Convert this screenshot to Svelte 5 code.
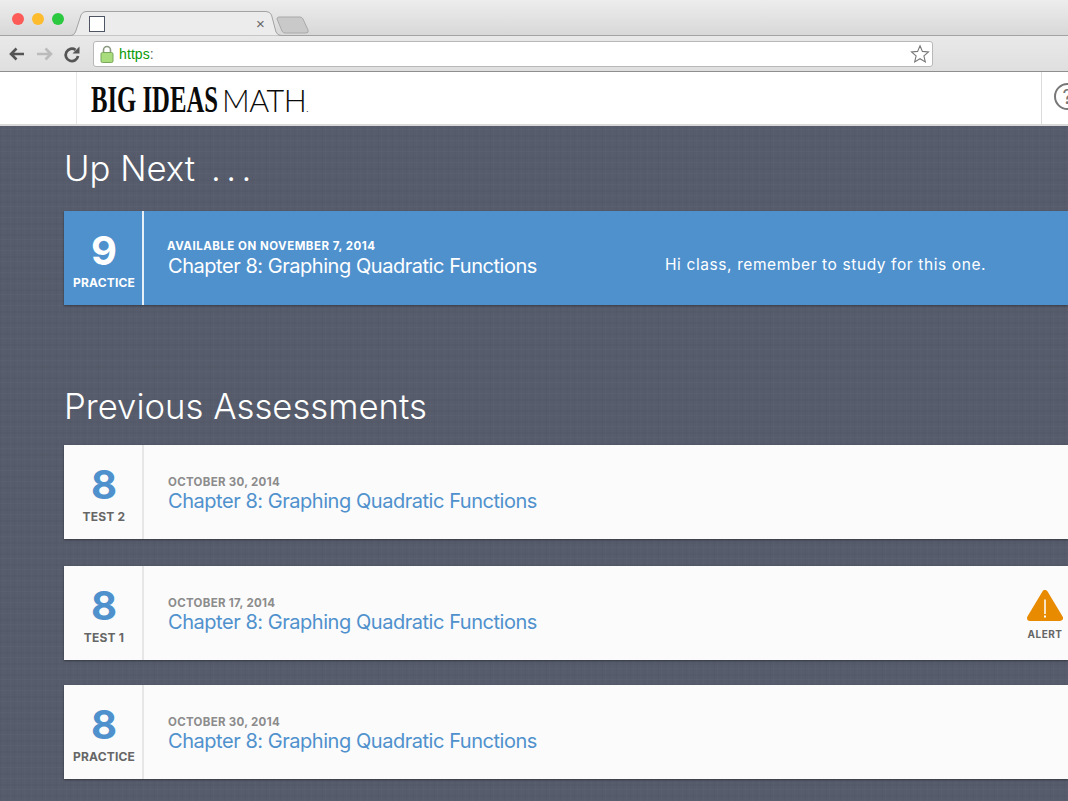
<script>
    const previous = [
        { num: 8, kind: 'TEST 2', date: 'OCTOBER 30, 2014', title: 'Chapter 8: Graphing Quadratic Functions', gap: 27 },
        { num: 8, kind: 'TEST 1', date: 'OCTOBER 17, 2014', title: 'Chapter 8: Graphing Quadratic Functions', alert: true, gap: 25 },
        { num: 8, kind: 'PRACTICE', date: 'OCTOBER 30, 2014', title: 'Chapter 8: Graphing Quadratic Functions', gap: 0 }
    ];
</script>

<div class="window">
    <div class="tabstrip">
        <div class="lights">
            <span class="light red"></span>
            <span class="light yellow"></span>
            <span class="light green"></span>
        </div>
        <div class="tab">
            <svg class="tab-shape" width="220" height="25" viewBox="0 0 220 25">
                <path d="M0 24.5 H3 Q6 24.5 7.5 21 L13 4 Q14.5 .5 18 .5 H198 Q202 .5 203.500 4 L208 21 Q209.500 24.500 213 24.500 H220" fill="#ececec" stroke="#a3a3a3"/>
            </svg>
            <span class="favicon"></span>
            <span class="close">×</span>
        </div>
        <svg class="newtab" width="34" height="18" viewBox="0 0 34 18">
            <path d="M1 3 Q1 1 3 1 H24 Q26 1 27 3 L32 14 Q33 17 30 17 H9 Q7 17 6 15 Z" fill="#c9c9c9" stroke="#a9a9a9"/>
        </svg>
    </div>
    <div class="toolbar">
        <svg class="nav" width="74" height="20" viewBox="0 0 74 20">
            <path d="M16 10 H3 M8.500 4.500 L3 10 L8.500 15.500" fill="none" stroke="#555" stroke-width="2.600"/>
            <path d="M29 10 H43 M37.500 4.500 L43 10 L37.500 15.500" fill="none" stroke="#bbb" stroke-width="2.600"/>
            <path d="M70 12 A6.200 6.200 0 1 1 67.500 5.800" fill="none" stroke="#555" stroke-width="2.700"/>
            <path d="M71.500 2.500 V9.500 H64.500 Z" fill="#555"/>
        </svg>
        <div class="omnibox">
            <svg width="14" height="18" viewBox="0 0 14 18">
                <path d="M3.500 8 V5 A3.500 3.500 0 0 1 10.500 5 V8" fill="none" stroke="#8a9a80" stroke-width="1.600"/>
                <rect x="1" y="7.500" width="12" height="10" rx="1.500" fill="#a9dc7c" stroke="#79a85a"/>
            </svg>
            <span class="url"><span class="scheme">https</span>:</span>
            <svg class="star" width="20" height="20" viewBox="0 0 20 20">
                <path d="M10 1.800 L12.400 7.400 L18.500 7.900 L13.900 11.900 L15.300 17.900 L10 14.700 L4.700 17.900 L6.100 11.900 L1.500 7.900 L7.600 7.400 Z" fill="#fff" stroke="#777" stroke-width="1.100"/>
            </svg>
        </div>
    </div>
    <header>
        <div class="logo-cell">
            <span class="logo"><span class="big">BIG IDEAS</span><span class="math">MATH</span><span class="dot">.</span></span>
        </div>
        <div class="help-cell">
            <span class="help">?</span>
        </div>
    </header>
    <main>
        <h1 class="next-title">Up Next <span class="dots">...</span></h1>
        <div class="card current">
            <div class="badge">
                <span class="num">9</span>
                <span class="kind">PRACTICE</span>
            </div>
            <div class="info">
                <span class="date">AVAILABLE ON NOVEMBER 7, 2014</span>
                <span class="title">Chapter 8: Graphing Quadratic Functions</span>
            </div>
            <div class="note">Hi class, remember to study for this one.</div>
        </div>

        <h1 class="prev-title">Previous Assessments</h1>
        {#each previous as item}
            <div class="card" style="margin-bottom: {item.gap}px">
                <div class="badge">
                    <span class="num">{item.num}</span>
                    <span class="kind">{item.kind}</span>
                </div>
                <div class="info">
                    <span class="date">{item.date}</span>
                    <span class="title">{item.title}</span>
                </div>
                {#if item.alert}
                    <div class="alert">
                        <svg width="36" height="32" viewBox="0 0 36 32">
                            <path d="M18 3 L33 28 H3 Z" fill="#e88b00" stroke="#e88b00" stroke-width="6" stroke-linejoin="round"/>
                            <path d="M18 9.500 V24" stroke="#fff" stroke-width="1.500"/>
                            <rect x="17" y="25.500" width="2" height="2" fill="#fff"/>
                        </svg>
                        <span>ALERT</span>
                    </div>
                {/if}
            </div>
        {/each}
    </main>
</div>

<style>
    :global(body) {
        margin: 0;
        overflow: hidden;
    }

    .window {
        width: 1068px;
        height: 801px;
        display: flex;
        flex-direction: column;
        overflow: hidden;
        font-family: Inter, "Liberation Sans", sans-serif;
    }

    .tabstrip {
        height: 35px;
        flex: none;
        display: flex;
        align-items: flex-start;
        background: linear-gradient(#ededed, #d8d8d8);
        border-bottom: 1px solid #a3a3a3;
        position: relative;
    }

    .lights {
        display: flex;
        gap: 8px;
        padding: 13px 0 0 12px;
        width: 60px;
    }

    .light {
        width: 12px;
        height: 12px;
        border-radius: 50%;
    }

    .red { background: #fc5b57; }
    .yellow { background: #fdbb2e; }
    .green { background: #2ac940; }

    .tab {
        position: relative;
        width: 220px;
        height: 25px;
        margin: 11px 0 0 -4px;
        z-index: 1;
    }

    .tab-shape {
        position: absolute;
        inset: 0;
    }

    .favicon {
        position: absolute;
        left: 21px;
        top: 5px;
        width: 14px;
        height: 14px;
        background: #fff;
        border: 1px solid #4f5563;
    }

    .close {
        position: absolute;
        left: 188px;
        top: 4px;
        font: 15px "Liberation Sans", sans-serif;
        color: #666;
    }

    .newtab {
        margin: 16px 0 0 -12px;
    }

    .toolbar {
        height: 35px;
        flex: none;
        display: flex;
        align-items: center;
        background: linear-gradient(#e9e9e9, #dfdfdf);
        border-bottom: 1px solid #8f8f8f;
    }

    .nav {
        margin-left: 8px;
        flex: none;
    }

    .omnibox {
        display: flex;
        align-items: center;
        gap: 5px;
        margin-left: 11px;
        width: 840px;
        height: 26px;
        padding: 0 0 0 6px;
        box-sizing: border-box;
        background: #fff;
        border: 1px solid #b8b8b8;
        border-radius: 3px;
    }

    .url {
        font: 14px "Liberation Sans", sans-serif;
        letter-spacing: 0.1px;
        color: #666;
    }

    .scheme { color: #0a9a0a; }

    .star { margin-left: auto; margin-right: 2px; }

    header {
        height: 52px;
        flex: none;
        display: flex;
        justify-content: space-between;
        background: #fff;
        border-bottom: 2px solid #d9d9d9;
        padding-left: 76px;
    }

    .logo-cell {
        border-left: 1px solid #e8e8e8;
        padding: 1px 0 0 14px;
        display: flex;
        align-items: center;
    }

    .logo {
        color: #0a0a0a;
        white-space: nowrap;
        display: flex;
        align-items: baseline;
    }

    .big {
        font: bold 38px "Liberation Serif", serif;
        transform: scaleX(0.65);
        transform-origin: left;
        width: 131px;
    }

    .math {
        font: 300 30.5px Lato, sans-serif;
        letter-spacing: -0.5px;
    }

    .dot { font-size: 8px; }

    .help-cell {
        flex: none;
        width: 14px;
        border-left: 1px solid #dcdcdc;
        padding: 11px 0 0 12px;
        overflow: hidden;
    }

    .help {
        display: block;
        width: 27px;
        height: 27px;
        box-sizing: border-box;
        border: 2px solid #777;
        border-radius: 50%;
        text-align: center;
        font-size: 20px;
        line-height: 24px;
        color: #777;
    }

    main {
        flex: 1;
        padding-left: 64px;
        background-color: #565c6b;
        background-image:
            repeating-linear-gradient(0deg, rgba(255, 255, 255, 0.02) 0 1px, transparent 1px 4px, rgba(0, 0, 0, 0.025) 4px 6px, transparent 6px 11px),
            repeating-linear-gradient(90deg, rgba(0, 0, 0, 0.02) 0 1px, transparent 1px 3px, rgba(255, 255, 255, 0.012) 3px 4px, transparent 4px 7px);
    }

    h1 {
        margin: 0;
        font-weight: 300;
        font-size: 34.7px;
        line-height: 40px;
        color: #fff;
    }

    .dots {
        margin-left: 6px;
        letter-spacing: 5.5px;
    }

    .next-title { padding-top: 22px; padding-bottom: 23px; }
    .prev-title { padding: 81px 0 19px 0; }

    .card {
        height: 94px;
        display: flex;
        align-items: stretch;
        background: #fbfbfb;
        box-shadow: 0 1px 2px rgba(0, 0, 0, 0.4);
    }

    .badge {
        width: 80px;
        padding-left: 2px;
        box-sizing: border-box;
        flex: none;
        display: flex;
        flex-direction: column;
        align-items: center;
        border-right: 2px solid #e6e6e6;
    }

    .num {
        margin-top: 17px;
        font-size: 40px;
        line-height: 46px;
        font-weight: 700;
        color: #4f91cd;
    }

    .kind {
        margin-top: 1px;
        font-size: 12px;
        line-height: 16px;
        font-weight: 700;
        letter-spacing: 0.2px;
        color: #666;
    }

    .info {
        display: flex;
        flex-direction: column;
        padding: 30px 0 0 24px;
        width: 521px;
        box-sizing: border-box;
        flex: none;
    }

    .date {
        font-size: 11.5px;
        line-height: 14px;
        font-weight: 700;
        letter-spacing: 0.3px;
        color: #8c8c8c;
    }

    .title {
        font-size: 20px;
        line-height: 25px;
        letter-spacing: -0.46px;
        color: #4f91cd;
        white-space: nowrap;
    }

    .alert {
        margin-left: auto;
        margin-right: 5px;
        padding-top: 24px;
        display: flex;
        flex-direction: column;
        align-items: center;
        font-size: 10px;
        line-height: 12px;
        font-weight: 700;
        letter-spacing: 0.5px;
        color: #666;
    }

    .alert svg { margin-bottom: 6px; }

    .current {
        background: #4f91cd;
    }

    .current .badge { border-right-color: #e6eff8; }
    .current .num, .current .kind, .current .date, .current .title { color: #fff; }

    .current .info { padding-top: 28px; }
    .current .date { line-height: 15px; margin-left: -1px; letter-spacing: 0.5px; }

    .note {
        padding-top: 45px;
        font-size: 15.5px;
        line-height: 18px;
        letter-spacing: 0.6px;
        color: #fff;
        white-space: nowrap;
    }
</style>
